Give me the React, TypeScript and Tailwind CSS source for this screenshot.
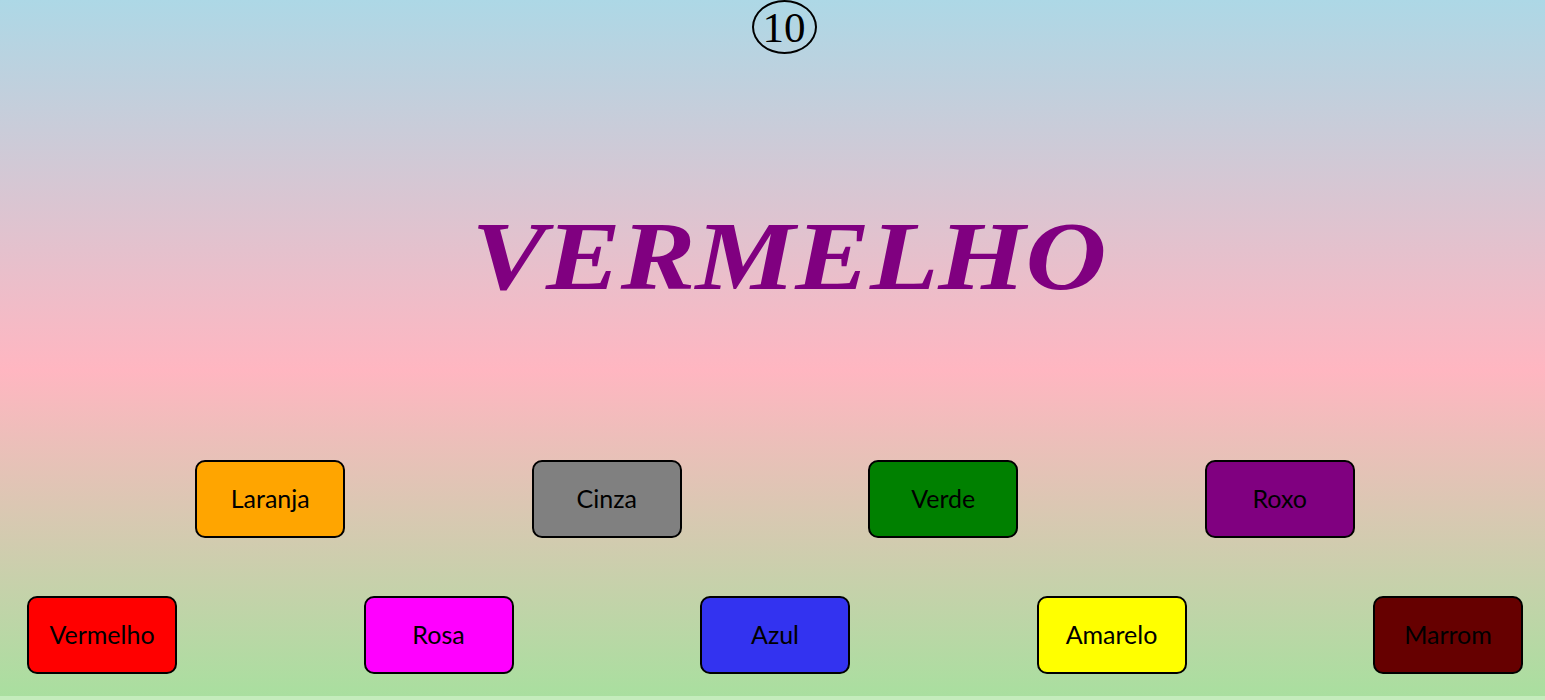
export default function App() {
  const top = [
    { name: 'Laranja', bg: 'bg-[#ffa500]' },
    { name: 'Cinza', bg: 'bg-[#808080]' },
    { name: 'Verde', bg: 'bg-[#008000]' },
    { name: 'Roxo', bg: 'bg-[#800080]' },
  ]
  const bottom = [
    { name: 'Vermelho', bg: 'bg-[#ff0000]' },
    { name: 'Rosa', bg: 'bg-[#ff00ff]' },
    { name: 'Azul', bg: 'bg-[#3333f0]' },
    { name: 'Amarelo', bg: 'bg-[#ffff00]' },
    { name: 'Marrom', bg: 'bg-[#660000]' },
  ]

  return (
    <div className="w-full h-[700px] bg-[#c4ecbc]">
      <div className="h-[696px] flex flex-col items-center bg-[linear-gradient(to_bottom,#add8e6_0px,#ffb6c1_370px,#a9df9f_696px)]">
        <div className="ml-[23px] w-[65px] h-[54px] rounded-[50%] border-2 border-black flex items-center justify-center font-['Liberation_Serif',serif] text-[43px] leading-none text-black">
          10
        </div>

        <h1 className="mt-[153px] ml-[33px] font-['Liberation_Serif',serif] font-bold italic text-[97px] leading-[100px] scale-x-[1.155] text-[#800080]">
          VERMELHO
        </h1>

        <div className="mt-[153px] ml-[5px] flex gap-[186.5px]">
          {top.map(b => (
            <ColorButton key={b.name} name={b.name} bg={b.bg} />
          ))}
        </div>

        <div className="mt-[58px] ml-[5px] flex gap-[186.5px]">
          {bottom.map(b => (
            <ColorButton key={b.name} name={b.name} bg={b.bg} />
          ))}
        </div>
      </div>
    </div>
  )
}

function ColorButton({ name, bg }: { name: string; bg: string }) {
  return (
    <button
      className={`${bg} w-[150px] h-[78px] rounded-[10px] border-2 border-black flex items-center justify-center font-['Lato',sans-serif] text-[25px] text-black`}
    >
      {name}
    </button>
  )
}
